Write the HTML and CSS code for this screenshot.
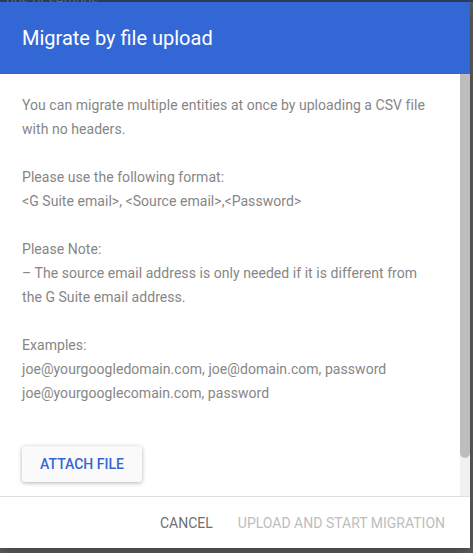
FILE: index.html
```html
<!DOCTYPE html>
<html lang="en">
<head>
  <meta charset="UTF-8" />
  <meta name="viewport" content="width=device-width, initial-scale=1.0"/>
  <title>Migrate by file upload</title>
  <link rel="stylesheet" href="styles.css">
</head>
<body>
  <div class="backdrop-bar">ups or settings</div>

  <div class="dialog">
    <div class="dialog-header">
      <h2>Migrate by file upload</h2>
    </div>

    <div class="dialog-main">
      <div class="dialog-body">
        <p>You can migrate multiple entities at once by uploading a CSV file with no headers.</p>

        <p>Please use the following format:<br>
        &lt;G Suite email&gt;, &lt;Source email&gt;,&lt;Password&gt;</p>

        <p>Please Note:<br>
        – The source email address is only needed if it is different from the G Suite email address.</p>

        <p>Examples:<br>
        joe@yourgoogledomain.com, joe@domain.com, password<br>
        joe@yourgooglecomain.com, password</p>

        <button class="attach-btn">Attach file</button>
      </div>
      <div class="scrollbar">
        <div class="scrollbar-thumb"></div>
      </div>
    </div>

    <div class="dialog-footer">
      <button class="text-btn">Cancel</button>
      <button class="text-btn" disabled>Upload and start migration</button>
    </div>
  </div>
</body>
</html>
```

FILE: styles.css
```css
body {
  margin: 0;
  height: 553px;
  overflow: hidden;
  background: #5e5e5e;
  font-family: Roboto, "Liberation Sans", sans-serif;
  color: #757575;
}
.backdrop-bar {
  height: 2px;
  overflow: hidden;
  background: #2f3d5e;
  color: #5d6680;
  font-size: 14px;
  line-height: 2px;
  padding-left: 6px;
}
.dialog {
  width: 470px;
  height: 546px;
  background: #fff;
  display: flex;
  flex-direction: column;
  box-shadow: 0 4px 12px rgba(0,0,0,0.3);
}
.dialog-header {
  height: 72px;
  flex-shrink: 0;
  background: #3367d6;
  padding: 0 22px;
  display: flex;
  align-items: center;
}
.dialog-header h2 {
  margin: 0;
  color: #fff;
  font-size: 20px;
  font-weight: 400;
}
.dialog-main {
  flex: 1;
  display: flex;
  overflow: hidden;
}
.dialog-body {
  flex: 1;
  padding: 19px 22px 0;
}
.scrollbar {
  width: 10px;
  background: #f1f1f1;
}
.scrollbar-thumb {
  height: 384px;
  background: #bdbdbd;
  border-radius: 0 0 5px 5px;
}
.dialog-body p {
  margin: 0 0 24px;
  font-size: 14px;
  line-height: 24px;
  letter-spacing: 0.05px;
  color: #868686;
}
.attach-btn {
  margin-top: 17px;
  width: 120px;
  height: 36px;
  border: none;
  border-radius: 3px;
  background: #fafafa;
  box-shadow: 0 1px 4px rgba(0,0,0,0.3);
  color: #3367d6;
  font-family: inherit;
  font-size: 14px;
  font-weight: 500;
  text-transform: uppercase;
  cursor: pointer;
}
.dialog-footer {
  height: 51px;
  flex-shrink: 0;
  border-top: 1px solid #e0e0e0;
  display: flex;
  justify-content: flex-end;
  align-items: center;
  gap: 25px;
  padding-right: 25px;
}
.text-btn {
  border: none;
  background: none;
  padding: 0;
  font-family: inherit;
  font-size: 14px;
  font-weight: 400;
  text-transform: uppercase;
  color: #6f6f6f;
  cursor: pointer;
}
.text-btn:disabled {
  color: #bdbdbd;
  cursor: default;
}
```
